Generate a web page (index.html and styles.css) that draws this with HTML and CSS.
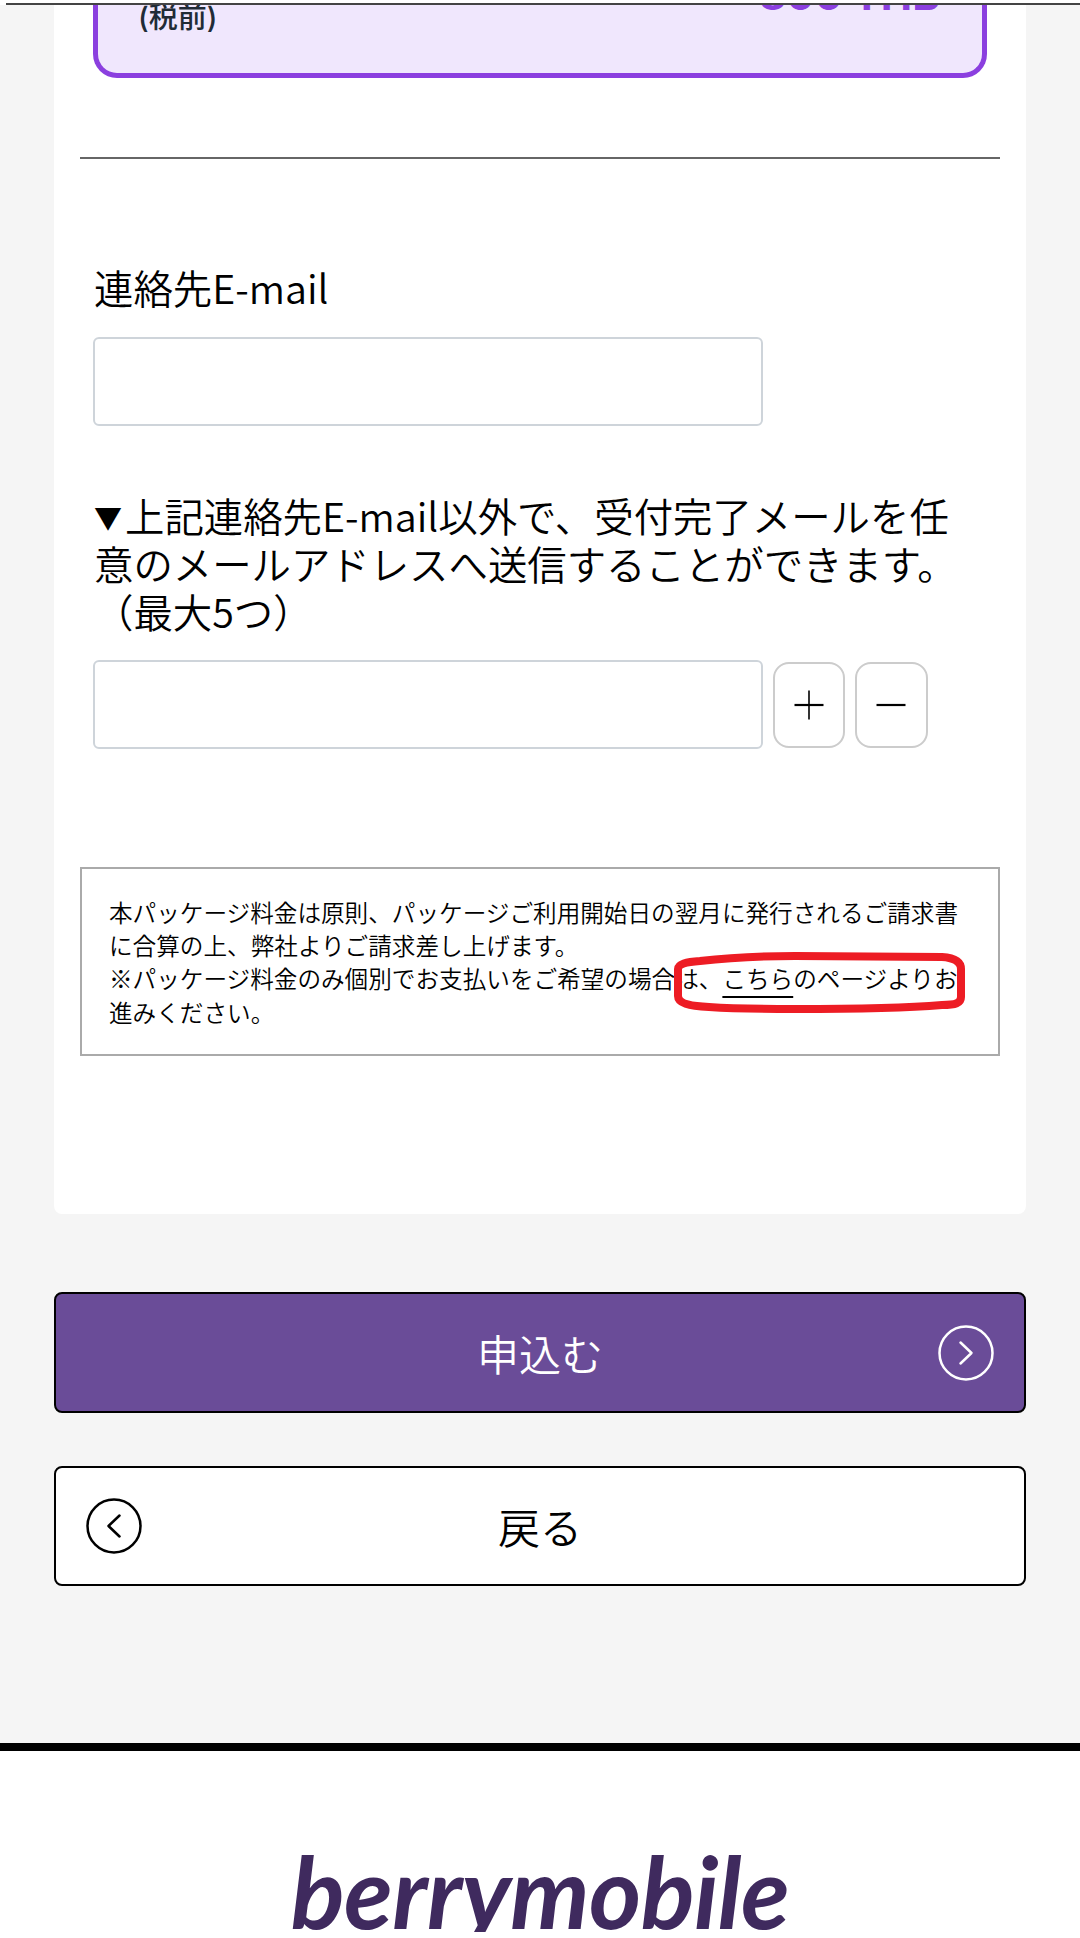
FILE: index.html
```html
<!DOCTYPE html>
<html lang="ja">
<head>
<meta charset="utf-8">
<title>berrymobile</title>
<link rel="stylesheet" href="styles.css">
</head>
<body>
<div class="topbar"><div class="topline"></div></div>
<main class="page">
  <section class="card">
    <div class="plan">
      <div class="plan-row">
        <span class="plan-tax">(税前)</span>
        <span class="plan-price">800 THB</span>
      </div>
    </div>
    <hr class="rule">
    <div class="form">
      <label class="label">連絡先E-mail</label>
      <input class="field" type="text">
      <p class="hint"><span class="hint-mark">▼</span>上記連絡先E-mail以外で、受付完了メールを任意のメールアドレスへ送信することができます。（最大5つ）</p>
      <div class="field-row">
        <input class="field" type="text">
        <button class="step" type="button" aria-label="追加">
          <svg width="30" height="30" viewBox="0 0 30 30" aria-hidden="true"><path d="M15 0.5 V29.5" stroke="#000" stroke-width="1.6" fill="none"/><path d="M0.5 15 H29.5" stroke="#000" stroke-width="2.2" fill="none"/></svg>
        </button>
        <button class="step" type="button" aria-label="削除">
          <svg width="30" height="30" viewBox="0 0 30 30" aria-hidden="true"><path d="M0.5 15 H29.5" stroke="#000" stroke-width="2.2" fill="none"/></svg>
        </button>
      </div>
    </div>
    <div class="notice">
      <p class="notice-text">本パッケージ料金は原則、パッケージご利用開始日の翌月に発行されるご請求書に合算の上、弊社よりご請求差し上げます。<br>※パッケージ料金のみ個別でお支払いをご希望の場合は、<a class="notice-link" href="#">こちら</a>のページよりお進みください。</p>
      <svg class="scribble" width="292" height="63" viewBox="0 0 292 63" aria-hidden="true">
        <path d="M26 10 C60 6 100 5 121 5 L268 6 C282 7 287 12 287 18 L287 46 C287 52 282 54 268 54 C220 58 150 58 121 58 C90 58 50 57 35 56 C14 55 4 52 4 45 L4 18 C4 13 12 11 26 10 Z" fill="none" stroke="#ed1c24" stroke-width="8"/>
      </svg>
    </div>
  </section>
  <div class="actions">
    <button class="cta cta-primary" type="button">
      <span></span>
      <span class="cta-text">申込む</span>
      <svg class="cta-icon" width="56" height="56" viewBox="0 0 56 56" aria-hidden="true"><circle cx="28" cy="28" r="26.5" fill="none" stroke="currentColor" stroke-width="2.5"/><path d="M22.5 17.5 L33.5 28 L22.5 38.5" fill="none" stroke="currentColor" stroke-width="2.5" stroke-linecap="round" stroke-linejoin="round"/></svg>
    </button>
    <button class="cta cta-back" type="button">
      <svg class="cta-icon" width="56" height="56" viewBox="0 0 56 56" aria-hidden="true"><circle cx="28" cy="28" r="26.5" fill="none" stroke="currentColor" stroke-width="2.5"/><path d="M33.5 17.5 L22.5 28 L33.5 38.5" fill="none" stroke="currentColor" stroke-width="2.5" stroke-linecap="round" stroke-linejoin="round"/></svg>
      <span class="cta-text">戻る</span>
      <span></span>
    </button>
  </div>
</main>
<footer class="footer">
  <div class="logo">berrymobile</div>
</footer>
</body>
</html>
```
FILE: styles.css
```css
* { box-sizing: border-box; }
html, body { margin: 0; padding: 0; }
body {
  width: 1080px;
  height: 1938px;
  overflow: hidden;
  background: #f5f5f5;
  font-family: "Noto Sans CJK JP", "Noto Sans", sans-serif;
  font-weight: 350;
  color: #000;
}
.topbar { height: 5px; background: #fff; padding: 3px 0 0 6px; }
.topline { height: 2px; background: #444; }
.page { padding: 0 54px; }
.card {
  background: #fff;
  border-radius: 0 0 8px 8px;
  padding: 0 26px 158px;
}
.plan {
  margin: 0 13px;
  height: 73px;
  background: #f0e7fd;
  border: 5px solid #8b3fdf;
  border-top: 0;
  border-radius: 0 0 24px 24px;
  overflow: hidden;
}
.plan-row {
  display: flex;
  justify-content: space-between;
  align-items: flex-start;
  padding: 0 42px 0 40px;
  margin-top: -7px;
  font-family: Inter, "Noto Sans CJK JP", sans-serif;
}
.plan-tax { font-size: 29px; line-height: 40px; font-weight: 500; color: #212b36; }
.plan-price { font-size: 42px; line-height: 48px; font-weight: 700; color: #8b3fdf; margin-top: -27px; }
.rule { margin: 79px 0 0; border: 0; height: 2px; background: #666; }
.form { padding: 104px 13px 0; }
.label { display: block; padding-left: 1px; font-size: 39.4px; line-height: 48px; }
.field {
  display: block;
  width: 670px;
  height: 89px;
  margin: 0;
  border: 2px solid #ced4da;
  border-radius: 6px;
  background: #fff;
}
.form > .field { margin-top: 26px; }
.hint { margin: 65px 0 0; padding-left: 1px; font-size: 39.4px; line-height: 48px; }
.hint-mark { display: inline-block; width: 31px; font-size: 28px; line-height: 1; vertical-align: 3px; }
.field-row { display: flex; align-items: center; gap: 9.7px; margin-top: 25px; }
.step {
  display: flex;
  align-items: center;
  justify-content: center;
  width: 72.7px;
  height: 86px;
  padding: 0;
  border: 2px solid #ccc;
  border-radius: 16px;
  background: #fff;
}
.notice {
  position: relative;
  margin-top: 118px;
  height: 189px;
  padding: 27px 27px;
  border: 2px solid #aaa;
}
.notice-text { margin: 0; font-size: 23.62px; line-height: 33.2px; }
.notice-link { color: #000; text-decoration: underline; text-decoration-thickness: 2px; text-underline-offset: 8px; }
.scribble { position: absolute; left: 592px; top: 82px; }
.actions { display: flex; flex-direction: column; gap: 53px; padding-top: 78px; }
.cta {
  display: grid;
  grid-template-columns: 1fr auto 1fr;
  align-items: center;
  width: 972px;
  height: 121px;
  padding: 0 30px;
  border: 2px solid #000;
  border-radius: 8px;
  font: 350 42px/48px "Noto Sans CJK JP", sans-serif;
}
.cta-primary { background: #6a4c98; color: #fff; }
.cta-primary .cta-icon { justify-self: end; }
.cta-back { background: #fff; color: #000; height: 120px; }
.cta-back .cta-icon { justify-self: start; }
.footer {
  margin-top: 157px;
  height: 195px;
  border-top: 8px solid #000;
  background: #fff;
  padding-top: 92px;
}
.logo {
  height: 89px;
  overflow: hidden;
  text-align: center;
  font-family: Lato, sans-serif;
  font-style: italic;
  font-weight: 700;
  font-size: 100px;
  line-height: 94px;
  letter-spacing: -0.6px;
  color: #3f2a5e;
}
```
